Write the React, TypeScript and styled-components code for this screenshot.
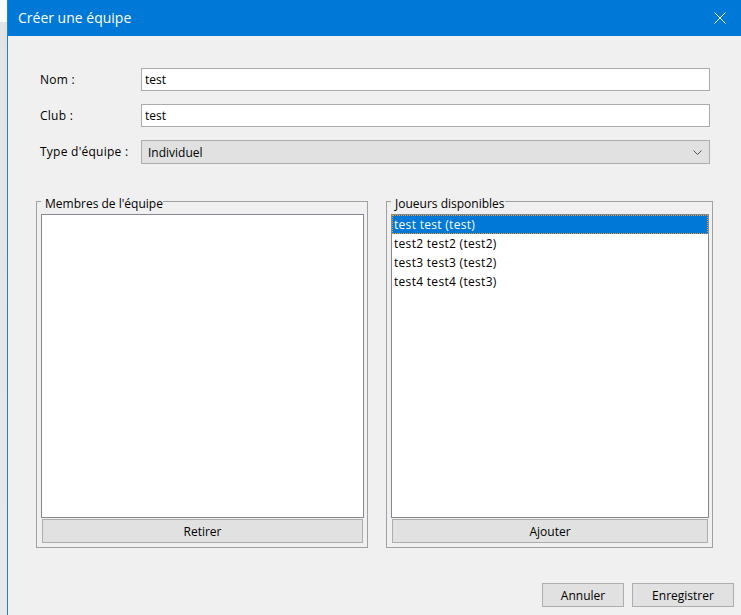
import React from "react";
import styled, { createGlobalStyle } from "styled-components";

const GlobalStyle = createGlobalStyle`
  html, body { margin: 0; padding: 0; background: #f0f0f0; }
  body { font-family: "Open Sans", "Noto Sans", sans-serif; color: #000; }
  * { box-sizing: border-box; }
`;

const Desktop = styled.div`
  display: flex;
  width: 741px;
  height: 615px;
  overflow: hidden;
  background: linear-gradient(to bottom, #fbfbfb 0, #fbfbfb 22px, #e3e3e3 22px, #e9e9e9 100%);
`;

const Window = styled.div`
  margin-left: 7px;
  flex: 1;
  display: flex;
  flex-direction: column;
  background: #f0f0f0;
  border-left: 1px solid #1883d7;
`;

const TitleBar = styled.div`
  height: 36px;
  flex: none;
  display: flex;
  align-items: center;
  justify-content: space-between;
  padding: 0 15px 0 10px;
  background: #0078d7;
  color: #fff;
  font-size: 14px;
`;

const TitleText = styled.span`
  line-height: 20px;
`;

const Form = styled.div`
  display: grid;
  grid-template-columns: 101px 1fr;
  row-gap: 13px;
  align-items: center;
  margin: 32px 31px 0 32px;
  font-size: 12px;
`;

const Label = styled.label`
  line-height: 16px;
  letter-spacing: 0.25px;
`;

const TextField = styled.input`
  height: 23px;
  margin: 0;
  padding: 0 3px;
  border: 1px solid #ababab;
  background: #fff;
  font: inherit;
  color: #000;
  outline: none;
`;

const Combo = styled.div`
  height: 24px;
  display: flex;
  align-items: center;
  justify-content: space-between;
  padding: 0 7px 0 6px;
  background: #e1e1e1;
  border: 1px solid #adadad;
`;

const Panels = styled.div`
  display: flex;
  gap: 18px;
  margin: 27px 0 0 28px;
`;

const Group = styled.fieldset<{ $width: number }>`
  width: ${(p) => p.$width}px;
  min-width: 0;
  margin: 0;
  padding: 3px 3px 4px 4px;
  border: 1px solid #a0a0a0;
  display: flex;
  flex-direction: column;
  gap: 1px;
  font-size: 12px;
`;

const Legend = styled.legend`
  margin: 0;
  padding: 6px 0 0 4px;
  line-height: 14px;
  color: #000;
`;

const List = styled.div`
  height: 304px;
  background: #fff;
  border: 1px solid #828790;
  display: flex;
  flex-direction: column;
`;

const Item = styled.div<{ $selected?: boolean }>`
  height: 19px;
  line-height: 17px;
  padding-left: 1px;
  letter-spacing: 0.3px;
  border: 1px ${(p) => (p.$selected ? "dotted #f29a2e" : "solid transparent")};
  background: ${(p) => (p.$selected ? "#0078d7" : "transparent")};
  color: ${(p) => (p.$selected ? "#fff" : "#000")};
  white-space: nowrap;
`;

const Button = styled.button<{ $width?: number }>`
  height: 24px;
  ${(p) => (p.$width ? `width: ${p.$width}px;` : "")}
  margin: 0;
  padding: 0;
  background: #e1e1e1;
  border: 1px solid #adadad;
  border-radius: 0;
  font-family: inherit;
  font-size: 12px;
  color: #000;
`;

const ListButton = styled(Button)`
  margin: 0 1px;
`;

const Footer = styled.div`
  display: flex;
  justify-content: flex-end;
  gap: 8px;
  margin-top: 35px;
  padding-right: 7px;
`;

const CloseIcon = () => (
  <svg width="12" height="12" viewBox="0 0 12 12" fill="none" stroke="#fff" strokeWidth="1">
    <path d="M0.5 0.5 L11.5 11.5 M11.5 0.5 L0.5 11.5" />
  </svg>
);

const Chevron = () => (
  <svg width="9" height="5" viewBox="0 0 9 5" fill="none" stroke="#505050" strokeWidth="1">
    <path d="M0.5 0.5 L4.5 4.5 L8.5 0.5" />
  </svg>
);

const players = [
  "test test (test)",
  "test2 test2 (test2)",
  "test3 test3 (test2)",
  "test4 test4 (test3)",
];

export default function App() {
  return (
    <>
      <GlobalStyle />
      <Desktop>
        <Window>
          <TitleBar>
            <TitleText>Créer une équipe</TitleText>
            <CloseIcon />
          </TitleBar>
          <Form>
            <Label>Nom :</Label>
            <TextField defaultValue="test" />
            <Label>Club :</Label>
            <TextField defaultValue="test" />
            <Label>Type d'équipe :</Label>
            <Combo>
              <span>Individuel</span>
              <Chevron />
            </Combo>
          </Form>
          <Panels>
            <Group $width={332}>
              <Legend>Membres de l'équipe</Legend>
              <List />
              <ListButton>Retirer</ListButton>
            </Group>
            <Group $width={327}>
              <Legend>Joueurs disponibles</Legend>
              <List>
                {players.map((p, i) => (
                  <Item key={p} $selected={i === 0}>
                    {p}
                  </Item>
                ))}
              </List>
              <ListButton>Ajouter</ListButton>
            </Group>
          </Panels>
          <Footer>
            <Button $width={82}>Annuler</Button>
            <Button $width={102}>Enregistrer</Button>
          </Footer>
        </Window>
      </Desktop>
    </>
  );
}
